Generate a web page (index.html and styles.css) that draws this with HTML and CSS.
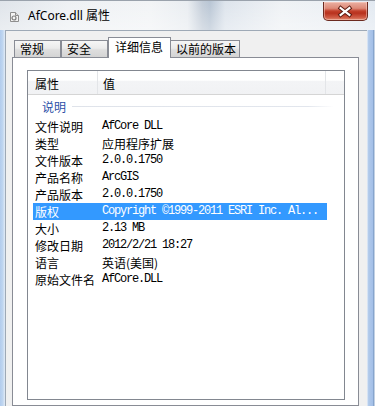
FILE: index.html
```html
<!DOCTYPE html>
<html lang="zh-CN">
<head>
<meta charset="utf-8">
<title>AfCore.dll 属性</title>
<link rel="stylesheet" href="styles.css">
</head>
<body>
<div class="window">
  <div class="titlebar">
    <svg class="app-icon" width="9" height="10" viewBox="0 0 9 10">
      <path d="M0.5 0.5 H5.5 L8.5 3.5 V9.5 H0.5 Z" fill="#f4f4f4" stroke="#8e8e8e"/>
      <path d="M5.5 0.5 V3.5 H8.5" fill="#dcdcdc" stroke="#8e8e8e"/>
      <circle cx="4" cy="6" r="2" fill="none" stroke="#7c7c7c" stroke-width="1.2"/>
    </svg>
    <span class="title">AfCore.dll 属性</span>
    <div class="close-btn">
      <svg width="45" height="19" viewBox="0 0 45 19">
        <path d="M18 6 L27 13 M27 6 L18 13" stroke="#5a1a10" stroke-width="4.2" stroke-linecap="square"/>
        <path d="M18 6 L27 13 M27 6 L18 13" stroke="#ffffff" stroke-width="2.2" stroke-linecap="square"/>
      </svg>
    </div>
  </div>
  <div class="body-row">
    <div class="frame-left"></div>
    <div class="client">
      <div class="tabs">
        <div class="tab">常规</div>
        <div class="tab">安全</div>
        <div class="tab active">详细信息</div>
        <div class="tab after-active">以前的版本</div>
      </div>
      <div class="panel">
        <div class="listview">
          <div class="lv-header">
            <div class="col-h c1">属性</div>
            <div class="col-h c2">值</div>
            <div class="col-h c3"></div>
          </div>
          <div class="group"><span class="group-title">说明</span><span class="group-line"></span></div>
          <div class="row"><span class="k">文件说明</span><span class="v mono">AfCore DLL</span></div>
          <div class="row"><span class="k">类型</span><span class="v">应用程序扩展</span></div>
          <div class="row"><span class="k">文件版本</span><span class="v mono">2.0.0.1750</span></div>
          <div class="row"><span class="k">产品名称</span><span class="v mono">ArcGIS</span></div>
          <div class="row"><span class="k">产品版本</span><span class="v mono">2.0.0.1750</span></div>
          <div class="row selected"><span class="k">版权</span><span class="v mono">Copyright ©1999-2011 ESRI Inc. Al...</span></div>
          <div class="row"><span class="k">大小</span><span class="v mono">2.13 MB</span></div>
          <div class="row"><span class="k">修改日期</span><span class="v mono">2012/2/21 18:27</span></div>
          <div class="row"><span class="k">语言</span><span class="v">英语(美国)</span></div>
          <div class="row"><span class="k">原始文件名</span><span class="v mono">AfCore.DLL</span></div>
        </div>
      </div>
    </div>
    <div class="frame-right"></div>
  </div>
</div>
</body>
</html>
```

FILE: styles.css
```css
html, body {
  margin: 0;
  padding: 0;
}
body {
  width: 375px;
  height: 406px;
  overflow: hidden;
  background: #ffffff;
  font-family: "Noto Sans CJK SC", "Noto Sans", sans-serif;
  font-size: 12px;
  color: #000;
}
.window {
  width: 375px;
  height: 406px;
  display: flex;
  flex-direction: column;
  background: #c4d7ee;
}
.titlebar {
  height: 29px;
  flex: none;
  display: flex;
  align-items: flex-start;
  padding: 0 7px 0 10px;
  border-top: 1px solid #9aa2ac;
  background:
    linear-gradient(180deg, rgba(255,255,255,0.0) 0%, rgba(255,255,255,0.35) 100%),
    linear-gradient(90deg, #dfe4ea 0%, #eef1f4 18%, #f2f4f6 40%, #e9edf1 50%, #c2ccd8 54%, #b8c5d4 56%, #dde4ec 60%, #eff2f5 75%, #ebeff4 90%, #e2e9f1 100%);
}
.app-icon {
  margin-top: 11px;
  flex: none;
}
.title {
  margin-left: 9px;
  margin-top: 6px;
  font-family: "Noto Sans", "Noto Sans CJK SC", sans-serif;
  font-size: 12px;
  line-height: 18px;
  color: #000;
}
.close-btn {
  margin-left: auto;
  margin-top: 1px;
  width: 45px;
  height: 19px;
  box-sizing: border-box;
  border: 1px solid #6b2a20;
  border-top: none;
  border-radius: 0 0 5px 5px;
  background: linear-gradient(180deg, #eab0a2 0%, #de8a78 35%, #c2402b 50%, #b8321e 62%, #cf5a44 85%, #e08a70 100%);
  box-shadow: inset 0 0 0 1px rgba(255,220,210,0.45);
  display: flex;
}
.close-btn svg {
  margin-left: -1px;
}
.body-row {
  flex: 1;
  display: flex;
  min-height: 0;
}
.frame-left {
  width: 5px;
  flex: none;
  background: linear-gradient(90deg, #b2cced 0%, #c0d6f0 55%, #e2ebf6 100%);
}
.frame-right {
  width: 8px;
  flex: none;
  background: linear-gradient(90deg, #e6eef8 0%, #b0c9ea 20%, #a4c0e8 70%, #7d9cc4 85%, #f4f7fb 100%);
}
.client {
  width: 362px;
  flex: none;
  box-sizing: border-box;
  background: #f0f0f0;
  border-left: 1px solid #9ea9b6;
  border-top: 1px solid #9ea9b6;
  padding: 6px 8px 0 6px;
  display: flex;
  flex-direction: column;
  min-height: 0;
}
.tabs {
  height: 20px;
  flex: none;
  display: flex;
  align-items: flex-end;
  padding-left: 2px;
}
.tab {
  position: relative;
  height: 17px;
  box-sizing: border-box;
  min-width: 47px;
  padding: 0 3px 0 5px;
  border: 1px solid #898c95;
  border-bottom: none;
  background: linear-gradient(180deg, #f6f6f6 0%, #ebebeb 45%, #dedede 55%, #d4d4d4 100%);
  line-height: 16px;
  font-size: 12px;
  white-space: nowrap;
}
.tab.active {
  height: 21px;
  margin-bottom: -1px;
  padding: 0 7px 0 6px;
  background: #ffffff;
  z-index: 2;
  line-height: 18px;
}
.tab.after-active {
  margin-left: -1px;
}
.panel {
  flex: 1;
  background: #ffffff;
  border: 1px solid #898c95;
  padding: 12px 13px 0 14px;
  min-height: 0;
}
.listview {
  height: 330px;
  box-sizing: border-box;
  border: 1px solid #828790;
  background: #fff;
}
.lv-header {
  height: 23px;
  display: flex;
  border-bottom: 1px solid #d5d5d5;
  background: linear-gradient(180deg, #ffffff 0%, #ffffff 40%, #f3f4f6 45%, #f1f2f4 100%);
}
.col-h {
  line-height: 25px;
  font-size: 12px;
  box-sizing: border-box;
  border-right: 1px solid #e3e5e8;
}
.col-h.c1 {
  width: 70px;
  padding-left: 7px;
}
.col-h.c2 {
  width: 228px;
  padding-left: 5px;
}
.col-h.c3 {
  flex: 1;
  border-right: none;
}
.group {
  height: 23px;
  display: flex;
  align-items: center;
  padding: 0 10px 0 14px;
}
.group-title {
  color: #1e3c96;
  font-size: 12px;
  line-height: 17px;
  color: #2b4fa8;
}
.group-line {
  flex: 1;
  height: 1px;
  margin-left: 6px;
  background: linear-gradient(90deg, #dfe3ea 0%, #e2e6ed 90%, rgba(226,230,237,0) 100%);
}
.row {
  height: 17px;
  width: 294px;
  margin-left: 5px;
  padding-left: 2px;
  box-sizing: border-box;
  display: flex;
  align-items: center;
  white-space: nowrap;
}
.row.selected {
  background: #3399ff;
  color: #fff;
}
.k {
  width: 67px;
  flex: none;
  font-size: 12px;
  line-height: 17px;
}
.v {
  font-size: 12px;
  line-height: 17px;
}
.v.mono {
  font-family: "Liberation Mono", "Noto Sans CJK SC", monospace;
  font-size: 12px;
  letter-spacing: -1.2px;
}
```
